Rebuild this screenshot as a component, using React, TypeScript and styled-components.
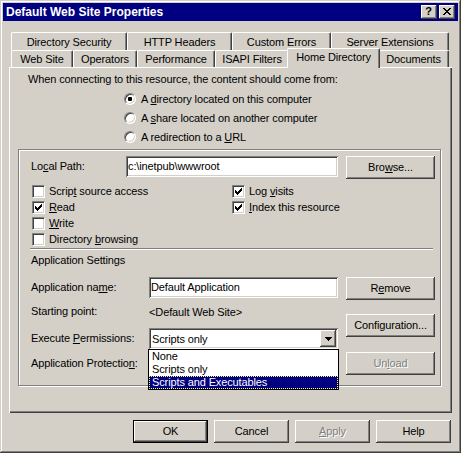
import React from "react";
import styled, {createGlobalStyle, css} from "styled-components";

const GlobalStyle = createGlobalStyle`
  html, body {
    margin: 0;
    padding: 0;
    background: #d4d0c8;
  }

  body {
    font-family: "Liberation Sans", Arial, sans-serif;
    font-size: 11px;
    letter-spacing: -0.12px;
    color: #000000;
  }

  * {
    box-sizing: border-box;
  }
`;

const raised = css`
  box-shadow: inset -1px -1px #404040, inset 1px 1px #ffffff, inset -2px -2px #808080, inset 2px 2px #d4d0c8;
`;

const sunken = css`
  box-shadow: inset 1px 1px #808080, inset -1px -1px #ffffff, inset 2px 2px #404040, inset -2px -2px #d4d0c8;
`;

const StyledWindow = styled.div`
  width: 461px;
  height: 453px;
  padding: 3px;
  background: #d4d0c8;
  display: flex;
  flex-direction: column;
  box-shadow: inset -1px -1px #404040, inset 1px 1px #d4d0c8, inset -2px -2px #808080, inset 2px 2px #ffffff;
`;

const StyledTitleBar = styled.div`
  height: 18px;
  background: #000080;
  display: flex;
  align-items: center;
  padding: 0 3px 0 3px;
`;

const StyledTitle = styled.div`
  flex: 1;
  color: #ffffff;
  font-weight: bold;
  font-size: 12px;
  letter-spacing: 0;
  line-height: 18px;
`;

const StyledCaptionButtons = styled.div`
  display: flex;
  gap: 2px;
`;

const StyledCaptionButton = styled.div`
  width: 16px;
  height: 14px;
  background: #d4d0c8;
  ${raised};
  display: flex;
  align-items: center;
  justify-content: center;
  font-weight: bold;
  font-size: 11px;
  line-height: 1;
  padding: 0 1px 1px 0;
`;

const StyledClient = styled.div`
  flex: 1;
  display: flex;
  flex-direction: column;
  padding: 11px 6px 0 6px;
`;

const StyledTabRow = styled.div<{ $h: number }>`
  height: ${props => props.$h}px;
  display: flex;
  align-items: flex-end;
  padding-left: 2px;
`;

const StyledTab = styled.div<{ $w: number, $h: number, $selected?: boolean }>`
  width: ${props => props.$w}px;
  height: ${props => props.$h}px;
  flex-shrink: 0;
  background: #d4d0c8;
  border-top: 1px solid #ffffff;
  border-left: 1px solid #ffffff;
  border-right: 1px solid #404040;
  border-radius: 2px 2px 0 0;
  box-shadow: inset -1px 0 #808080;
  display: flex;
  align-items: center;
  justify-content: center;
  white-space: nowrap;
  ${props => props.$selected && css`
    position: relative;
    z-index: 2;
    width: ${props.$w + 4}px;
    height: ${props.$h + 3}px;
    margin: 0 -2px -1px -2px;
    padding-bottom: 3px;
  `}
`;

const StyledPanel = styled.div`
  width: 443px;
  height: 346px;
  flex-shrink: 0;
  padding-top: 6px;
  box-shadow: inset 1px 1px #ffffff, inset -1px -1px #404040, inset -2px -2px #808080;
  display: flex;
  flex-direction: column;
`;

const StyledIntro = styled.div`
  margin-left: 19px;
  height: 13px;
  line-height: 13px;
`;

const StyledRadioList = styled.div`
  margin: 3px 0 0 115px;
  display: flex;
  flex-direction: column;
`;

const StyledRadioRow = styled.div`
  height: 19px;
  display: flex;
  align-items: center;
  gap: 5px;
`;

const StyledRadio = styled.span<{ $checked?: boolean }>`
  width: 12px;
  height: 12px;
  border-radius: 50%;
  background: #ffffff;
  border: 1px solid;
  border-color: #808080 #ffffff #ffffff #808080;
  box-shadow: inset 1px 1px #404040, inset -1px -1px #d4d0c8;
  display: flex;
  align-items: center;
  justify-content: center;

  &::after {
    content: "";
    width: 4px;
    height: 4px;
    border-radius: 1px;
    background: ${props => props.$checked ? "#000000" : "transparent"};
  }
`;

const StyledGroup = styled.div`
  margin: 3px 0 0 9px;
  width: 423px;
  height: 237px;
  border: 1px solid #808080;
  box-shadow: inset 1px 1px #ffffff, 1px 1px #ffffff;
  display: flex;
  flex-direction: column;
`;

const StyledPathRow = styled.div`
  margin: 6px 0 0 12px;
  display: flex;
  align-items: flex-start;
`;

const StyledLabel = styled.div<{ $w: number }>`
  width: ${props => props.$w}px;
  flex-shrink: 0;
  height: 21px;
  line-height: 21px;
  white-space: nowrap;
`;

const StyledTextBox = styled.div<{ $w: number }>`
  width: ${props => props.$w}px;
  height: 21px;
  background: #ffffff;
  ${sunken};
  padding-left: 2px;
  line-height: 21px;
  white-space: nowrap;
`;

const StyledButton = styled.div<{ $w: number, $default?: boolean }>`
  width: ${props => props.$w}px;
  height: 23px;
  flex-shrink: 0;
  background: #d4d0c8;
  ${raised};
  display: flex;
  align-items: center;
  justify-content: center;
  padding-bottom: 1px;
  ${props => props.$default && css`
    box-shadow: inset 0 0 0 1px #000000, inset -2px -2px #404040, inset 2px 2px #ffffff, inset -3px -3px #808080;
  `}
`;

const StyledButtonText = styled.span<{ $disabled?: boolean }>`
  ${props => props.$disabled && css`
    color: #808080;
    text-shadow: 1px 1px #ffffff;
  `}
`;

const StyledCheckGrid = styled.div`
  margin: 4px 0 0 13px;
  display: grid;
  grid-template-columns: 200px auto;
  grid-auto-rows: 16px;
`;

const StyledCheckRow = styled.div`
  display: flex;
  align-items: center;
  gap: 4px;
`;

const StyledCheckBox = styled.span`
  width: 13px;
  height: 13px;
  background: #ffffff;
  border: 1px solid;
  border-color: #808080 #ffffff #ffffff #808080;
  box-shadow: inset 1px 1px #404040, inset -1px -1px #d4d0c8;
  display: flex;
  align-items: center;
  justify-content: center;
`;

const StyledSeparator = styled.div`
  margin: 1px 0 0 11px;
  width: 403px;
  height: 2px;
  border-top: 1px solid #808080;
  border-bottom: 1px solid #ffffff;
`;

const StyledSectionTitle = styled.div`
  margin: 4px 0 0 12px;
  height: 13px;
  line-height: 13px;
`;

const StyledAppArea = styled.div`
  margin: 10px 0 0 12px;
  display: flex;
  gap: 8px;
`;

const StyledFieldColumn = styled.div`
  width: 307px;
  display: flex;
  flex-direction: column;
`;

const StyledFieldRow = styled.div<{ $mt: number }>`
  margin-top: ${props => props.$mt}px;
  height: 21px;
  display: flex;
  align-items: center;
`;

const StyledValue = styled.div`
  white-space: nowrap;
`;

const StyledButtonColumn = styled.div`
  display: flex;
  flex-direction: column;
`;

const StyledButtonSlot = styled.div<{ $mt: number, $ml?: number }>`
  margin-top: ${props => props.$mt}px;
  margin-left: ${props => props.$ml || 0}px;
`;

const StyledCombo = styled.div`
  position: relative;
  width: 189px;
  height: 21px;
  background: #ffffff;
  ${sunken};
  display: flex;
  align-items: center;
  padding: 2px 2px 2px 3px;
`;

const StyledComboText = styled.div`
  flex: 1;
  white-space: nowrap;
`;

const StyledComboArrow = styled.div`
  width: 16px;
  height: 17px;
  background: #d4d0c8;
  ${raised};
  display: flex;
  align-items: center;
  justify-content: center;
`;

const StyledDropList = styled.div`
  position: absolute;
  z-index: 3;
  top: 21px;
  left: -1px;
  width: 191px;
  height: 41px;
  background: #ffffff;
  border: 1px solid #000000;
  display: flex;
  flex-direction: column;
`;

const StyledDropItem = styled.div<{ $selected?: boolean }>`
  height: 13px;
  line-height: 13px;
  padding-left: 3px;
  white-space: nowrap;
  ${props => props.$selected && css`
    background: #000080;
    color: #ffffff;
    outline: 1px dotted #ffff80;
    outline-offset: -1px;
  `}
`;

const StyledButtonBar = styled.div`
  margin-top: 7px;
  padding-right: 1px;
  display: flex;
  justify-content: flex-end;
  gap: 6px;
`;

const CloseGlyph = () => (
    <svg width="8" height="7" viewBox="0 0 8 7" shapeRendering="crispEdges">
        <path fill="#000"
              d="M0 0h2v1h-2z M6 0h2v1h-2z M1 1h2v1h-2z M5 1h2v1h-2z M2 2h4v1h-4z M3 3h2v1h-2z M2 4h4v1h-4z M1 5h2v1h-2z M5 5h2v1h-2z M0 6h2v1h-2z M6 6h2v1h-2z"/>
    </svg>
);

const CheckGlyph = () => (
    <svg width="7" height="7" viewBox="0 0 7 7" shapeRendering="crispEdges">
        <path fill="#000"
              d="M0 2h1v3h-1z M1 3h1v3h-1z M2 4h1v3h-1z M3 3h1v3h-1z M4 2h1v3h-1z M5 1h1v3h-1z M6 0h1v3h-1z"/>
    </svg>
);

const ArrowGlyph = () => (
    <svg width="7" height="4" viewBox="0 0 7 4" shapeRendering="crispEdges">
        <path fill="#000" d="M0 0h7v1h-7z M1 1h5v1h-5z M2 2h3v1h-3z M3 3h1v1h-1z"/>
    </svg>
);

const backTabs = [
    {label: "Directory Security", w: 116},
    {label: "HTTP Headers", w: 105},
    {label: "Custom Errors", w: 99},
    {label: "Server Extensions", w: 118},
];

const frontTabs = [
    {label: "Web Site", w: 62},
    {label: "Operators", w: 64},
    {label: "Performance", w: 78},
    {label: "ISAPI Filters", w: 74},
    {label: "Home Directory", w: 89, selected: true},
    {label: "Documents", w: 71},
];

function CheckItem({checked, children}: { checked?: boolean, children: React.ReactNode }) {
    return (
        <StyledCheckRow>
            <StyledCheckBox>{checked && <CheckGlyph/>}</StyledCheckBox>
            <span>{children}</span>
        </StyledCheckRow>
    );
}

export default function App() {
    return (
        <>
            <GlobalStyle/>
            <StyledWindow>
                <StyledTitleBar>
                    <StyledTitle>Default Web Site Properties</StyledTitle>
                    <StyledCaptionButtons>
                        <StyledCaptionButton>?</StyledCaptionButton>
                        <StyledCaptionButton><CloseGlyph/></StyledCaptionButton>
                    </StyledCaptionButtons>
                </StyledTitleBar>

                <StyledClient>
                    <StyledTabRow $h={18}>
                        {backTabs.map(tab => (
                            <StyledTab key={tab.label} $w={tab.w} $h={18}>{tab.label}</StyledTab>
                        ))}
                    </StyledTabRow>
                    <StyledTabRow $h={17}>
                        {frontTabs.map(tab => (
                            <StyledTab key={tab.label} $w={tab.w} $h={17} $selected={tab.selected}>
                                {tab.label}
                            </StyledTab>
                        ))}
                    </StyledTabRow>

                    <StyledPanel>
                        <StyledIntro>When connecting to this resource, the content should come from:</StyledIntro>
                        <StyledRadioList>
                            <StyledRadioRow>
                                <StyledRadio $checked/>
                                <span>A <u>d</u>irectory located on this computer</span>
                            </StyledRadioRow>
                            <StyledRadioRow>
                                <StyledRadio/>
                                <span>A <u>s</u>hare located on another computer</span>
                            </StyledRadioRow>
                            <StyledRadioRow>
                                <StyledRadio/>
                                <span>A redirection to a <u>U</u>RL</span>
                            </StyledRadioRow>
                        </StyledRadioList>

                        <StyledGroup>
                            <StyledPathRow>
                                <StyledLabel $w={95}>Lo<u>c</u>al Path:</StyledLabel>
                                <StyledTextBox $w={212}>c:\inetpub\wwwroot</StyledTextBox>
                                <StyledButtonSlot $mt={0} $ml={8}>
                                    <StyledButton $w={89}><span>Bro<u>w</u>se...</span></StyledButton>
                                </StyledButtonSlot>
                            </StyledPathRow>

                            <StyledCheckGrid>
                                <CheckItem>Scrip<u>t</u> source access</CheckItem>
                                <CheckItem checked>Log <u>v</u>isits</CheckItem>
                                <CheckItem checked><u>R</u>ead</CheckItem>
                                <CheckItem checked><u>I</u>ndex this resource</CheckItem>
                                <CheckItem><u>W</u>rite</CheckItem>
                                <span/>
                                <CheckItem>Directory <u>b</u>rowsing</CheckItem>
                            </StyledCheckGrid>

                            <StyledSeparator/>
                            <StyledSectionTitle>Application Settings</StyledSectionTitle>

                            <StyledAppArea>
                                <StyledFieldColumn>
                                    <StyledFieldRow $mt={0}>
                                        <StyledLabel $w={118}>Application na<u>m</u>e:</StyledLabel>
                                        <StyledTextBox $w={189}>Default Application</StyledTextBox>
                                    </StyledFieldRow>
                                    <StyledFieldRow $mt={3}>
                                        <StyledLabel $w={118}>Starting point:</StyledLabel>
                                        <StyledValue>&lt;Default Web Site&gt;</StyledValue>
                                    </StyledFieldRow>
                                    <StyledFieldRow $mt={6}>
                                        <StyledLabel $w={118}>Execute <u>P</u>ermissions:</StyledLabel>
                                        <StyledCombo>
                                            <StyledComboText>Scripts only</StyledComboText>
                                            <StyledComboArrow><ArrowGlyph/></StyledComboArrow>
                                            <StyledDropList>
                                                <StyledDropItem>None</StyledDropItem>
                                                <StyledDropItem>Scripts only</StyledDropItem>
                                                <StyledDropItem $selected>Scripts and Executables</StyledDropItem>
                                            </StyledDropList>
                                        </StyledCombo>
                                    </StyledFieldRow>
                                    <StyledFieldRow $mt={4}>
                                        <StyledLabel $w={118}>Application Protectio<u>n</u>:</StyledLabel>
                                        <StyledCombo>
                                            <StyledComboText/>
                                            <StyledComboArrow><ArrowGlyph/></StyledComboArrow>
                                        </StyledCombo>
                                    </StyledFieldRow>
                                </StyledFieldColumn>

                                <StyledButtonColumn>
                                    <StyledButtonSlot $mt={0}>
                                        <StyledButton $w={89}><span>R<u>e</u>move</span></StyledButton>
                                    </StyledButtonSlot>
                                    <StyledButtonSlot $mt={14}>
                                        <StyledButton $w={89}><span>Configuration...</span></StyledButton>
                                    </StyledButtonSlot>
                                    <StyledButtonSlot $mt={15}>
                                        <StyledButton $w={89}>
                                            <StyledButtonText $disabled>Un<u>l</u>oad</StyledButtonText>
                                        </StyledButton>
                                    </StyledButtonSlot>
                                </StyledButtonColumn>
                            </StyledAppArea>
                        </StyledGroup>
                    </StyledPanel>

                    <StyledButtonBar>
                        <StyledButton $w={75} $default><span>OK</span></StyledButton>
                        <StyledButton $w={75}><span>Cancel</span></StyledButton>
                        <StyledButton $w={75}>
                            <StyledButtonText $disabled><u>A</u>pply</StyledButtonText>
                        </StyledButton>
                        <StyledButton $w={75}><span>Help</span></StyledButton>
                    </StyledButtonBar>
                </StyledClient>
            </StyledWindow>
        </>
    );
}
